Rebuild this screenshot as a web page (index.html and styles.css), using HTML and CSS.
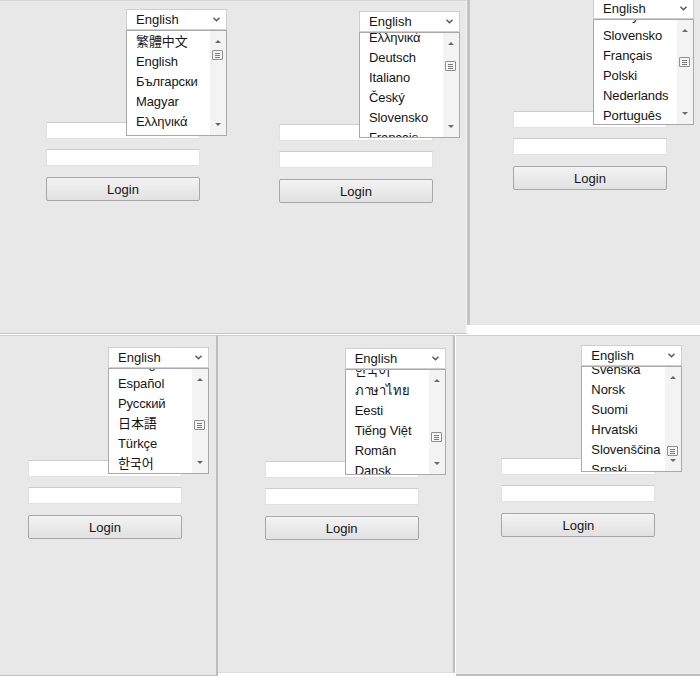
FILE: index.html
```html
<!DOCTYPE html>
<html lang="en">
<head>
<meta charset="utf-8">
<title>Login – language menu</title>
<link rel="stylesheet" href="styles.css">
</head>
<body>
<div class="collage">
  <div class="row row-top">
    <section class="shot shot-wide">
      <form class="login p1">
        <div class="lang">
          <div class="lang-select"><span>English</span><svg class="chev" viewBox="0 0 7 5" width="7" height="5"><path d="M0.5 0.8 L3.5 3.8 L6.5 0.8" /></svg></div>
          <div class="lang-list">
            <ul class="lang-items" style="margin-top:1px">
              <li lang="zh-Hant">繁體中文</li><li>English</li><li>Български</li><li>Magyar</li><li>Ελληνικά</li><li>Deutsch</li>
            </ul>
            <div class="lang-scroll"><i class="arr up"></i><b class="thumb" style="top:19px"></b><i class="arr down"></i></div>
          </div>
        </div>
        <input class="field" type="text"><input class="field" type="password"><button class="btn" type="button">Login</button>
      </form>
      <form class="login p2">
        <div class="lang">
          <div class="lang-select"><span>English</span><svg class="chev" viewBox="0 0 7 5" width="7" height="5"><path d="M0.5 0.8 L3.5 3.8 L6.5 0.8" /></svg></div>
          <div class="lang-list">
            <ul class="lang-items" style="margin-top:-5px">
              <li>Ελληνικά</li><li>Deutsch</li><li>Italiano</li><li>Český</li><li>Slovensko</li><li>Français</li>
            </ul>
            <div class="lang-scroll"><i class="arr up"></i><b class="thumb" style="top:28px"></b><i class="arr down"></i></div>
          </div>
        </div>
        <input class="field" type="text"><input class="field" type="password"><button class="btn" type="button">Login</button>
      </form>
    </section>
    <section class="shot shot-right">
      <form class="login p3">
        <div class="lang">
          <div class="lang-select"><span>English</span><svg class="chev" viewBox="0 0 7 5" width="7" height="5"><path d="M0.5 0.8 L3.5 3.8 L6.5 0.8" /></svg></div>
          <div class="lang-list">
            <ul class="lang-items" style="margin-top:-14px">
              <li>Český</li><li>Slovensko</li><li>Français</li><li>Polski</li><li>Nederlands</li><li>Português</li>
            </ul>
            <div class="lang-scroll"><i class="arr up"></i><b class="thumb" style="top:37px"></b><i class="arr down"></i></div>
          </div>
        </div>
        <input class="field" type="text"><input class="field" type="password"><button class="btn" type="button">Login</button>
      </form>
    </section>
  </div>
  <div class="row row-bottom">
    <section class="shot shot-a">
      <form class="login p4">
        <div class="lang">
          <div class="lang-select"><span>English</span><svg class="chev" viewBox="0 0 7 5" width="7" height="5"><path d="M0.5 0.8 L3.5 3.8 L6.5 0.8" /></svg></div>
          <div class="lang-list">
            <ul class="lang-items" style="margin-top:-15px">
              <li>Português</li><li>Español</li><li>Русский</li><li lang="ja">日本語</li><li>Türkçe</li><li lang="ko">한국어</li>
            </ul>
            <div class="lang-scroll"><i class="arr up"></i><b class="thumb" style="top:51px"></b><i class="arr down"></i></div>
          </div>
        </div>
        <input class="field" type="text"><input class="field" type="password"><button class="btn" type="button">Login</button>
      </form>
    </section>
    <section class="shot shot-b">
      <form class="login p5">
        <div class="lang">
          <div class="lang-select"><span>English</span><svg class="chev" viewBox="0 0 7 5" width="7" height="5"><path d="M0.5 0.8 L3.5 3.8 L6.5 0.8" /></svg></div>
          <div class="lang-list">
            <ul class="lang-items" style="margin-top:-9px">
              <li lang="ko">한국어</li><li lang="th">ภาษาไทย</li><li>Eesti</li><li>Tiếng Việt</li><li>Român</li><li>Dansk</li>
            </ul>
            <div class="lang-scroll"><i class="arr up"></i><b class="thumb" style="top:62px"></b><i class="arr down"></i></div>
          </div>
        </div>
        <input class="field" type="text"><input class="field" type="password"><button class="btn" type="button">Login</button>
      </form>
    </section>
    <section class="shot shot-c">
      <form class="login p6">
        <div class="lang">
          <div class="lang-select"><span>English</span><svg class="chev" viewBox="0 0 7 5" width="7" height="5"><path d="M0.5 0.8 L3.5 3.8 L6.5 0.8" /></svg></div>
          <div class="lang-list">
            <ul class="lang-items" style="margin-top:-7px">
              <li>Svenska</li><li>Norsk</li><li>Suomi</li><li>Hrvatski</li><li>Slovenščina</li><li>Srpski</li>
            </ul>
            <div class="lang-scroll"><i class="arr up"></i><b class="thumb" style="top:79px"></b><i class="arr down"></i></div>
          </div>
        </div>
        <input class="field" type="text"><input class="field" type="password"><button class="btn" type="button">Login</button>
      </form>
    </section>
  </div>
</div>
</body>
</html>
```

FILE: styles.css
```css
* { box-sizing: border-box; }

html, body {
  margin: 0;
  background: #ffffff;
}

body {
  font-family: "Liberation Sans", Arial, "Noto Sans CJK TC", "Noto Sans CJK JP", "Noto Sans CJK KR", sans-serif;
  font-size: 13px;
  color: #151515;
}

.collage {
  width: 700px;
  height: 700px;
  overflow: hidden;
  display: flex;
  flex-direction: column;
}

.row {
  display: flex;
  align-items: flex-start;
}

.row-top { height: 335px; }

.shot {
  background: #e8e8e8;
  display: flex;
  align-items: flex-start;
  overflow: hidden;
}

/* top strip: two login screens side by side */
.shot-wide {
  width: 467px;
  height: 334px;
  border-top: 1px solid #d6d6d6;
  border-bottom: 1px solid #c6c6c6;
  border-right: 1px solid #f4f4f4;
}

.shot-right {
  width: 233px;
  height: 325px;
  border-left: 3px solid #c4c4c4;
}

/* bottom strip */
.shot-a {
  width: 218px;
  height: 341px;
  border-top: 1px solid #cdcdcd;
  border-right: 2px solid #bcbcbc;
  border-bottom: 1px solid #c4c4c4;
}

.shot-b {
  width: 238px;
  height: 338px;
  border-top: 1px solid #cdcdcd;
  border-right: 2px solid #bcbcbc;
  border-bottom: 1px solid #dedede;
}

.shot-c {
  width: 244px;
  height: 341px;
  margin-left: 1px;
  border-top: 1px solid #cdcdcd;
  border-bottom: 2px solid #c0c0c0;
}

/* form placement inside each screen */
.p1 { margin: 8px 0 0 46px; }
.p2 { margin: 10px 0 0 79px; }
.p3 { margin: -2px 0 0 43px; }
.p4 { margin: 11px 0 0 28px; }
.p5 { margin: 12px 0 0 47px; }
.p6 { margin: 9px 0 0 45px; }

/* login form */
.login {
  width: 154px;
  display: flex;
  flex-direction: column;
  flex: none;
}

.lang {
  position: relative;
  margin-left: 80px;
  width: 101px;
  height: 21px;
  margin-bottom: 92px;
}

.lang-select {
  height: 21px;
  background: #ffffff;
  border: 1px solid #cfcfcf;
  display: flex;
  align-items: center;
  justify-content: space-between;
  padding: 0 6px 0 9px;
  line-height: 19px;
}

.chev {
  fill: none;
  stroke: #555555;
  stroke-width: 1.4;
}

.lang-list {
  position: absolute;
  top: 21px;
  left: 0;
  width: 101px;
  height: 106px;
  background: #ffffff;
  border: 1px solid #a9a9a9;
  overflow: hidden;
  z-index: 2;
}

.lang-items {
  list-style: none;
  margin: 0;
  padding: 0 0 0 9px;
}

.lang-items li {
  height: 20px;
  line-height: 20px;
  white-space: nowrap;
  letter-spacing: -0.1px;
}

.lang-scroll {
  position: absolute;
  top: 0;
  right: 0;
  bottom: 0;
  width: 16px;
  background: #f3f3f3;
}

.arr {
  position: absolute;
  left: 5px;
  width: 0;
  height: 0;
  border-left: 3px solid transparent;
  border-right: 3px solid transparent;
}

.arr.up {
  top: 9px;
  border-bottom: 3px solid #6a6a6a;
}

.arr.down {
  bottom: 9px;
  border-top: 3px solid #6a6a6a;
}

.thumb {
  position: absolute;
  left: 2px;
  width: 11px;
  height: 10px;
  border: 1px solid #8e8e8e;
  border-radius: 1px;
  background:
    linear-gradient(#7a7a7a, #7a7a7a) 2px 2px / 5px 1px no-repeat,
    linear-gradient(#7a7a7a, #7a7a7a) 2px 4px / 5px 1px no-repeat,
    linear-gradient(#7a7a7a, #7a7a7a) 2px 6px / 5px 1px no-repeat,
    #f6f6f6;
}

.field {
  display: block;
  width: 154px;
  height: 17px;
  margin: 0 0 10px;
  padding: 0;
  background: #ffffff;
  border: 1px solid #e2e2e2;
  border-top-color: #cccccc;
  border-radius: 1px;
}

.btn {
  width: 154px;
  height: 24px;
  margin-top: 1px;
  padding: 0;
  font: inherit;
  color: #151515;
  background: linear-gradient(#f3f3f3, #e1e1e1);
  border: 1px solid #a7a7a7;
  border-radius: 2px;
}
```
